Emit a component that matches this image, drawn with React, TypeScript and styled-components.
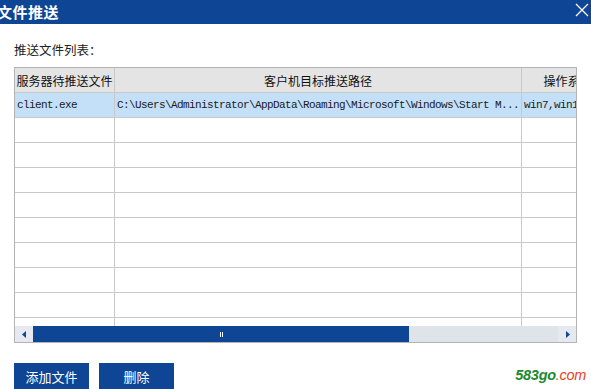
import React from 'react';
import styled, {createGlobalStyle} from 'styled-components';

const GlobalStyle = createGlobalStyle`
  html, body {
    margin: 0;
    padding: 0;
    background: #ffffff;
    overflow: hidden;
  }
  body {
    font-family: "Noto Sans CJK SC", "Noto Sans", sans-serif;
  }
`;

const BLUE = '#0e4594';
const GRID = '#c9c9c9';

const Dialog = styled.div`
  position: relative;
  width: 591px;
  height: 389px;
  display: flex;
  flex-direction: column;
  background: #ffffff;
  overflow: hidden;
`;

const TitleBar = styled.div`
  height: 24px;
  flex: none;
  background: ${BLUE};
  display: flex;
  align-items: center;
  justify-content: space-between;
  padding: 0 1px 0 0;
  color: #ffffff;
`;

const Title = styled.div`
  margin-left: -3px;
  font-size: 15px;
  font-weight: 700;
  line-height: 24px;
  letter-spacing: 0.5px;
`;

const CloseButton = styled.button`
  width: 16px;
  height: 16px;
  padding: 0;
  border: none;
  background: transparent;
  display: flex;
  align-items: center;
  justify-content: center;
  margin-top: -5px;
`;

const Content = styled.div`
  flex: 1;
  display: flex;
  flex-direction: column;
  padding: 18px 14px 0 14px;
`;

const Label = styled.div`
  font-size: 12.5px;
  line-height: 16px;
  color: #222222;
  margin-bottom: 9px;
`;

const Frame = styled.div`
  width: 563px;
  height: 276px;
  box-sizing: border-box;
  border: 1px solid #b3b3b3;
  display: flex;
  flex-direction: column;
`;

const Viewport = styled.div`
  height: 258px;
  overflow: hidden;
  flex: none;
`;

const Grid = styled.div`
  display: grid;
  grid-template-columns: 100px 407px 116px;
  width: 623px;
`;

const HeaderCell = styled.div`
  height: 24px;
  background: #e4e4e4;
  border-right: 1px solid ${GRID};
  border-bottom: 1px solid ${GRID};
  display: flex;
  align-items: center;
  justify-content: center;
  padding: 0 2px;
  font-size: 12px;
  color: #111111;
  white-space: nowrap;
  overflow: hidden;
`;

const Cell = styled.div<{$selected?: boolean}>`
  height: 24px;
  background: ${p => (p.$selected ? '#c4e0f8' : '#ffffff')};
  border-right: 1px solid ${GRID};
  border-bottom: 1px solid ${GRID};
  display: flex;
  align-items: center;
  padding: 0 2px;
  font-family: "Liberation Mono", "DejaVu Sans Mono", monospace;
  font-size: 11px;
  letter-spacing: -0.6px;
  color: #1a1a1a;
  white-space: nowrap;
  overflow: hidden;
`;

const ScrollBar = styled.div`
  height: 16px;
  flex: none;
  display: flex;
  background: #dfe3ea;
`;

const ArrowBox = styled.div`
  width: 18px;
  height: 16px;
  flex: none;
  display: flex;
  align-items: center;
  justify-content: center;
  background: #e6e9ef;
`;

const Thumb = styled.div`
  width: 376px;
  height: 16px;
  background: ${BLUE};
  display: flex;
  align-items: center;
  justify-content: center;
  gap: 1px;
`;

const Grip = styled.span`
  width: 1px;
  height: 5px;
  background: #ffffff;
`;

const Track = styled.div`
  flex: 1;
`;

const ButtonRow = styled.div`
  display: flex;
  gap: 10px;
  margin-top: 20px;
`;

const ActionButton = styled.button`
  width: 75px;
  height: 26px;
  border: none;
  background: ${BLUE};
  color: #ffffff;
  font-family: "Noto Sans CJK SC", sans-serif;
  font-size: 13px;
  padding: 0;
`;

const Watermark = styled.div`
  position: absolute;
  right: 5px;
  bottom: 6px;
  font-family: "Liberation Sans", Arial, sans-serif;
  font-size: 14.5px;
  font-weight: 700;
  font-style: italic;
  color: #1d8a2c;
  letter-spacing: -0.3px;
`;

const Dot = styled.span`
  color: #e8431e;
  font-weight: 400;
`;

const emptyRows = 9;

const App = (): JSX.Element => {
  return (
    <Dialog>
      <GlobalStyle/>
      <TitleBar>
        <Title>文件推送</Title>
        <CloseButton>
          <svg width="14" height="14" viewBox="0 0 14 14">
            <path d="M1 1 L13 13 M13 1 L1 13" stroke="#ffffff" strokeWidth="1.3" fill="none"/>
          </svg>
        </CloseButton>
      </TitleBar>
      <Content>
        <Label>推送文件列表：</Label>
        <Frame>
          <Viewport>
            <Grid>
              <HeaderCell>服务器待推送文件</HeaderCell>
              <HeaderCell>客户机目标推送路径</HeaderCell>
              <HeaderCell>操作系统版本</HeaderCell>
              <Cell $selected>client.exe</Cell>
              <Cell $selected>C:\Users\Administrator\AppData\Roaming\Microsoft\Windows\Start M...</Cell>
              <Cell $selected>win7,win10</Cell>
              {Array.from({length: emptyRows}).map((_, i) => (
                <React.Fragment key={i}>
                  <Cell/>
                  <Cell/>
                  <Cell/>
                </React.Fragment>
              ))}
            </Grid>
          </Viewport>
          <ScrollBar>
            <ArrowBox>
              <svg width="5" height="7" viewBox="0 0 5 7">
                <path d="M4 0 L0 3.5 L4 7 Z" fill={BLUE}/>
              </svg>
            </ArrowBox>
            <Thumb>
              <Grip/>
              <Grip/>
            </Thumb>
            <Track/>
            <ArrowBox>
              <svg width="5" height="7" viewBox="0 0 5 7">
                <path d="M1 0 L5 3.5 L1 7 Z" fill={BLUE}/>
              </svg>
            </ArrowBox>
          </ScrollBar>
        </Frame>
        <ButtonRow>
          <ActionButton>添加文件</ActionButton>
          <ActionButton>删除</ActionButton>
        </ButtonRow>
      </Content>
      <Watermark>583go<Dot>.com</Dot></Watermark>
    </Dialog>
  );
};

export default App;
